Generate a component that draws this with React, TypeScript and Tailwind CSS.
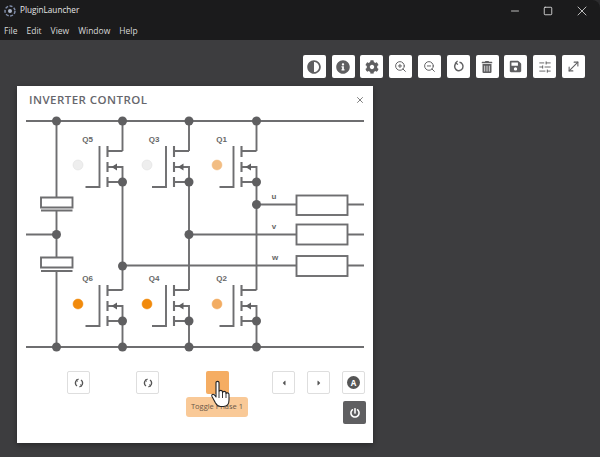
import { FaAdjust, FaInfoCircle, FaCog, FaTrashAlt, FaSave, FaPowerOff, FaCaretLeft, FaCaretRight } from "react-icons/fa";
import { ZoomIn, ZoomOut, SlidersHorizontal, MoveDiagonal, Minus, Square, X } from "lucide-react";
import type { ReactNode } from "react";

const LINE = "#6e6e70";
const NODE = "#5f5f61";

// page coords minus circuit origin (17, 116)
const ox = -17;
const oy = -116;

function Mosfet({ x, y, name, led, ledX }: { x: number; y: number; name: string; led: string; ledX: number }) {
  // x = rail column, y = drain line height
  return (
    <g>
      <text x={x - 35} y={y - 9} fontSize="8" fontWeight="700" fill="#666" textAnchor="middle" fontFamily="Liberation Sans, sans-serif">{name}</text>
      <circle cx={ledX} cy={y + 14} r="5" fill={led} stroke={led === "#eeeeee" ? "#dcdcdc" : led} strokeWidth="0.5" />
      <path d={`M${x - 37} ${y + 36}H${x - 23}V${y - 5}`} fill="none" stroke={LINE} strokeWidth="1.9" />
      <path d={`M${x - 15} ${y - 5}V${y + 6}M${x - 15} ${y + 11}V${y + 21}M${x - 15} ${y + 26}V${y + 36}`} fill="none" stroke={LINE} strokeWidth="2.1" />
      <path d={`M${x - 15} ${y}H${x}M${x - 15} ${y + 16}H${x}V${y + 31}M${x - 15} ${y + 31}H${x}`} fill="none" stroke={LINE} strokeWidth="1.9" />
      <path d={`M${x - 11} ${y + 16}L${x - 5.5} ${y + 12.5}V${y + 19.5}Z`} fill={NODE} />
      <circle cx={x} cy={y + 31} r="4.5" fill={NODE} />
    </g>
  );
}

function Circuit() {
  const cols = [122.5, 189, 256.5];
  const nodes: [number, number][] = [
    [56.5, 121], [122.5, 121], [189, 121], [256.5, 121],
    [56.5, 234.5], [189, 234.5], [122.5, 266], [256.5, 204.5],
    [56.5, 347], [122.5, 347], [189, 347], [256.5, 347],
  ];
  return (
    <svg width="356" height="240" viewBox="0 0 356 240" className="block shrink-0">
      <g transform={`translate(${ox} ${oy})`}>
        <g fill="none" stroke={LINE} strokeWidth="1.9">
          <path d="M26 121H364M26 347H364M26 234.5H56.5" />
          {cols.map((c) => (
            <path key={c} d={`M${c} 121V151M${c} 182V290M${c} 321V347`} />
          ))}
          <path d="M56.5 121V197M56.5 210V257M56.5 271V347" />
          <path d="M41 197.5H72.5V207.5H41Z" />
          <path d="M41 210.5H72.5M41 271H72.5" strokeWidth="2.1" />
          <path d="M41 257.5H72.5V267.5H41Z" />
          <path d="M256.5 204.5H296.5M189 234.5H296.5M122.5 265.5H296.5" />
          <path d="M348 204.5H364M348 234.5H364M348 265.5H364" />
          <rect x="296.5" y="195.5" width="51" height="19.5" />
          <rect x="296.5" y="224.5" width="51" height="20" />
          <rect x="296.5" y="256" width="51" height="20" />
        </g>
        <Mosfet x={122.5} y={151} name="Q5" led="#eeeeee" ledX={78} />
        <Mosfet x={189} y={151} name="Q3" led="#eeeeee" ledX={147} />
        <Mosfet x={256.5} y={151} name="Q1" led="#f2bd83" ledX={217} />
        <Mosfet x={122.5} y={290} name="Q6" led="#f18a0c" ledX={78} />
        <Mosfet x={189} y={290} name="Q4" led="#f18a0c" ledX={147} />
        <Mosfet x={256.5} y={290} name="Q2" led="#f2ac62" ledX={217} />
        {nodes.map(([x, y]) => (
          <circle key={`${x}-${y}`} cx={x} cy={y} r="4.5" fill={NODE} />
        ))}
        <g fontSize="8" fontWeight="700" fill="#666" textAnchor="middle" fontFamily="Liberation Sans, sans-serif">
          <text x="274" y="199">u</text>
          <text x="274" y="229">v</text>
          <text x="275" y="260">w</text>
        </g>
      </g>
    </svg>
  );
}

function ResetIcon() {
  return (
    <svg width="13" height="13" viewBox="0 0 13 13" fill="none" stroke="#5f5f61" strokeWidth="1.5">
      <path d="M7.5 2.3A4.2 4.2 0 1 1 4.6 2.9" />
      <path d="M5.6 0.8L3.6 3L6 4.6" strokeWidth="1.2" />
    </svg>
  );
}

function LoopIcon() {
  return (
    <svg width="10" height="10" viewBox="0 0 10 10" fill="none" stroke="#555" strokeWidth="1.4">
      <path d="M3 2A3.6 3.6 0 0 0 3 8" />
      <path d="M7 8A3.6 3.6 0 0 0 7 2" />
      <path d="M4.8 1.2L2.6 1.6L3.4 3.6M5.2 8.8L7.4 8.4L6.6 6.4" strokeWidth="1" />
    </svg>
  );
}

function ToolBtn({ children }: { children: ReactNode }) {
  return (
    <div className="flex h-[23px] w-[23px] shrink-0 items-center justify-center rounded-[2px] bg-white text-[#5f5f61]">
      {children}
    </div>
  );
}

function CtrlBtn({ children, className }: { children?: ReactNode; className?: string }) {
  return (
    <div className={`flex h-[23px] w-[23px] shrink-0 items-center justify-center rounded-[2px] border border-[#dedede] bg-white text-[#555] ${className ?? ""}`}>
      {children}
    </div>
  );
}

export default function App() {
  return (
    <div className="flex h-[457px] w-[600px] flex-col overflow-hidden bg-[#2c2c2e]" style={{ fontFamily: "'Open Sans', 'Noto Sans', sans-serif" }}>
      <div className="h-[40px] shrink-0 rounded-tr-[8px] bg-[#1b1b1c] text-[#e6e6e6]">
        <div className="flex h-[21px] items-center">
          <svg width="14" height="14" viewBox="0 0 14 14" className="ml-[3px] mr-[3px]">
            <circle cx="7" cy="7" r="5" fill="none" stroke="#7f8ca8" strokeWidth="1.5" strokeDasharray="3 1.5" />
            <circle cx="7" cy="7" r="2" fill="#aab4c8" />
          </svg>
          <span className="text-[8.2px]">PluginLauncher</span>
          <div className="ml-auto flex items-center pr-[10px]">
            <Minus size={12} strokeWidth={1.6} className="mr-[22px]" />
            <Square size={10} strokeWidth={2} className="mr-[21px]" />
            <X size={16} strokeWidth={1.2} />
          </div>
        </div>
        <div className="flex h-[19px] items-center gap-[9px] pl-[4px] pt-[2px] text-[8.5px] text-[#d8d8d8]">
          <span>File</span>
          <span>Edit</span>
          <span>View</span>
          <span>Window</span>
          <span>Help</span>
        </div>
      </div>

      <div className="relative flex-1 bg-[#3d3d3f]">
        <div className="flex justify-end gap-[5.8px] pr-[15px] pt-[15px]">
          <ToolBtn><FaAdjust size={14} /></ToolBtn>
          <ToolBtn><FaInfoCircle size={14} /></ToolBtn>
          <ToolBtn><FaCog size={14} /></ToolBtn>
          <ToolBtn><ZoomIn size={13} strokeWidth={1.8} /></ToolBtn>
          <ToolBtn><ZoomOut size={13} strokeWidth={1.8} /></ToolBtn>
          <ToolBtn><ResetIcon /></ToolBtn>
          <ToolBtn><FaTrashAlt size={12} /></ToolBtn>
          <ToolBtn><FaSave size={13} /></ToolBtn>
          <ToolBtn><SlidersHorizontal size={14} strokeWidth={1.6} /></ToolBtn>
          <ToolBtn><MoveDiagonal size={15} strokeWidth={1.7} /></ToolBtn>
        </div>

        <div className="ml-[17px] mt-[8px] flex h-[357px] w-[356px] flex-col bg-white shadow-[0_2px_6px_rgba(0,0,0,0.35)]">
          <div className="flex h-[30px] shrink-0 items-center justify-between pb-[2px] pl-[12px] pr-[8px]">
            <span className="text-[11.5px] font-semibold tracking-[0.45px] text-[#66666c]">INVERTER CONTROL</span>
            <X size={10} strokeWidth={1.8} className="text-[#555]" />
          </div>
          <Circuit />
          <div className="relative flex-1">
            <div className="flex pl-[50px] pt-[15px]">
              <CtrlBtn><LoopIcon /></CtrlBtn>
              <CtrlBtn className="ml-[46px]"><LoopIcon /></CtrlBtn>
              <div className="ml-[47px] h-[23px] w-[23px] shrink-0 rounded-[2px] bg-[#f5ad63]" />
              <CtrlBtn className="ml-[43px]"><FaCaretLeft size={8} /></CtrlBtn>
              <CtrlBtn className="ml-[12px]"><FaCaretRight size={8} /></CtrlBtn>
              <CtrlBtn className="ml-[12px]">
                <span className="flex h-[13px] w-[13px] items-center justify-center rounded-full bg-[#555] text-[8px] font-bold text-white">A</span>
              </CtrlBtn>
            </div>
            <div className="mr-[7px] mt-[7px] flex justify-end">
              <div className="flex h-[23px] w-[23px] items-center justify-center rounded-[2px] bg-[#5f5f61] text-white">
                <FaPowerOff size={10} />
              </div>
            </div>

            {/* tooltip and cursor over the buttons */}
            <div className="absolute left-[169px] top-[41px] flex h-[20px] w-[62px] items-center justify-center rounded-[3px] bg-[#f9c997] text-[7.5px] text-[#6a5748]">
              Toggle Phase 1
            </div>
            <svg width="22" height="28" viewBox="0 0 22 28" className="absolute left-[193px] top-[24px]">
              <path
                d="M6 2.5C6 1 9 1 9 2.5V11.5C9.5 10 12 10 12.5 11.5V12.5C13 11 15.5 11 16 12.5V13.5C16.5 12.5 19 12.5 19 14.5V20C19 24 17 26.5 13.5 26.5H10.5C8 26.5 7 25.5 5.5 23L2 16.5C1 14.5 3 13.5 4.5 15L6 17Z"
                fill="#ffffff"
                stroke="#222222"
                strokeWidth="1.1"
                strokeLinejoin="round"
              />
              <path d="M9 12V18M12.5 12.5V18M16 13.5V18" stroke="#222222" strokeWidth="0.9" />
            </svg>
          </div>
        </div>
      </div>
    </div>
  );
}
